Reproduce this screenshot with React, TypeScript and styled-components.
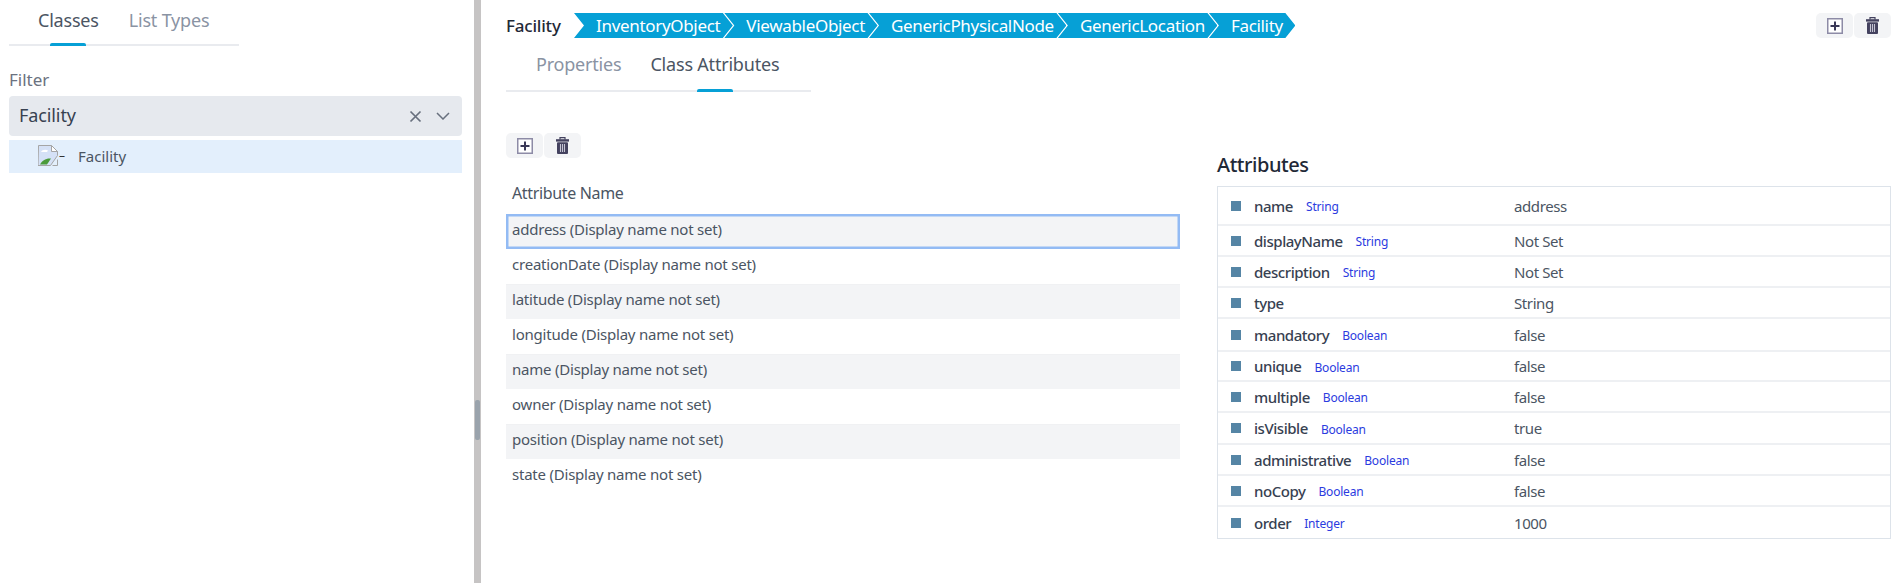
import React from "react";
import styled, { createGlobalStyle } from "styled-components";

const GlobalStyle = createGlobalStyle`
  html, body { margin: 0; padding: 0; background: #fff; }
  body { font-family: "Noto Sans", "Open Sans", sans-serif; color: #374151; }
`;

const attributeNames = ["address", "creationDate", "latitude", "longitude", "name", "owner", "position", "state"];
const crumbs = ["InventoryObject", "ViewableObject", "GenericPhysicalNode", "GenericLocation", "Facility"];
const details = [
  { name: "name", type: "String", value: "address", h: 39 },
  { name: "displayName", type: "String", value: "Not Set", h: 31 },
  { name: "description", type: "String", value: "Not Set", h: 31 },
  { name: "type", type: "", value: "String", h: 31 },
  { name: "mandatory", type: "Boolean", value: "false", h: 33 },
  { name: "unique", type: "Boolean", value: "false", h: 30 },
  { name: "multiple", type: "Boolean", value: "false", h: 31 },
  { name: "isVisible", type: "Boolean", value: "true", h: 32 },
  { name: "administrative", type: "Boolean", value: "false", h: 31 },
  { name: "noCopy", type: "Boolean", value: "false", h: 31 },
  { name: "order", type: "Integer", value: "1000", h: 31 },
];

const AddIcon = () => (
  <svg width="16" height="16" viewBox="0 0 16 16">
    <rect x="0.75" y="0.75" width="14.5" height="14.5" fill="#fff" stroke="#8d8ba6" strokeWidth="1.5" />
    <path d="M8 3.500v9M3.500 8h9" stroke="#3a3857" strokeWidth="2" fill="none" />
  </svg>
);

const TrashIcon = () => (
  <svg width="13" height="17" viewBox="0 0 13 17">
    <path d="M4 2.500V0.700h5V2.500" stroke="#44425f" strokeWidth="1.200" fill="none" />
    <rect x="0" y="2.200" width="13" height="2.400" fill="#44425f" />
    <rect x="1" y="5.200" width="11" height="11.800" rx="1" fill="#44425f" />
    <path d="M4.500 7v8M6.500 7v8M8.500 7v8" stroke="#c4c3d2" strokeWidth="1.100" />
  </svg>
);

const BrokenImage = () => (
  <svg width="20" height="21" viewBox="0 0 20 21">
    <path d="M0.500 0.500h13l6 6v4l-7 10h-12.500z" fill="#d5e1f6" stroke="#a5a5a5" />
    <path d="M3 7c1-2.500 5-3 7-1.500l-1 1.500z" fill="#fff" />
    <path d="M2 19.500c2-4 6-6.500 11-6l-4 6z" fill="#4b9b3a" />
    <path d="M13.500 0.500v6h6z" fill="#fff" stroke="#a5a5a5" />
    <path d="M19.500 14.500v6h-5" fill="none" stroke="#a5a5a5" />
  </svg>
);

const Page = styled.div`
  display: flex;
  width: 1896px;
  height: 583px;
  overflow: hidden;
  background: #fff;
`;

const LeftPane = styled.aside`
  width: 474px;
  flex: none;
  padding: 0 12px 0 9px;
  box-sizing: border-box;
`;

const Splitter = styled.div`
  width: 7px;
  flex: none;
  background: #c6c4c4;
  position: relative;
`;

const Handle = styled.div`
  position: absolute;
  left: 1px;
  top: 400px;
  width: 5px;
  height: 40px;
  border-radius: 2px;
  background: #9aa3ac;
`;

const RightPane = styled.main`
  flex: 1;
  min-width: 0;
  padding: 13px 5px 0 25px;
  box-sizing: border-box;
`;

const TabBar = styled.div<{ $width: number; $height: number; $pad: number; $gap: number; $lineHeight: number }>`
  display: flex;
  width: ${(p) => p.$width}px;
  height: ${(p) => p.$height}px;
  padding-left: ${(p) => p.$pad}px;
  gap: ${(p) => p.$gap}px;
  box-sizing: border-box;
  border-bottom: 2px solid #e9ebef;
  line-height: ${(p) => p.$lineHeight}px;
`;

const Tab = styled.div<{ $active?: boolean }>`
  position: relative;
  height: 100%;
  font-size: 18px;
  letter-spacing: -0.2px;
  color: ${(p) => (p.$active ? "#4b5563" : "#8a93a3")};
  &::after {
    content: "";
    display: ${(p) => (p.$active ? "block" : "none")};
    position: absolute;
    left: 50%;
    bottom: -2px;
    width: 36px;
    height: 3px;
    margin-left: -18px;
    border-radius: 2px 2px 0 0;
    background: #06a0d6;
  }
`;

const FilterLabel = styled.div`
  margin-top: 23px;
  font-size: 17px;
  line-height: 22px;
  color: #6b7280;
`;

const FilterSelect = styled.div`
  display: flex;
  align-items: center;
  height: 40px;
  margin-top: 5px;
  padding: 0 12px 0 10px;
  box-sizing: border-box;
  border-radius: 4px;
  background: #e6e9ee;
  font-size: 18px;
  color: #374151;
`;

const SelectText = styled.span`
  flex: 1;
  padding-bottom: 2px;
  letter-spacing: -0.1px;
`;

const SelectIcons = styled.div`
  display: flex;
  align-items: center;
  gap: 14px;
`;

const TreeRow = styled.div`
  display: flex;
  align-items: center;
  height: 33px;
  margin-top: 4px;
  padding: 0 0 2px 29px;
  box-sizing: border-box;
  background: #e3effc;
  font-size: 15px;
  color: #4b5563;
`;

const TreeDash = styled.span`
  width: 20px;
  padding-left: 1px;
  box-sizing: border-box;
  color: #333;
  font-size: 12px;
`;

const HeaderRow = styled.div`
  display: flex;
  align-items: center;
  height: 25px;
`;

const TitleText = styled.div`
  width: 68px;
  font-size: 17px;
  font-weight: 500;
  letter-spacing: -0.2px;
  color: #1f2937;
`;

const Crumbs = styled.div`
  display: flex;
  flex: 1;
`;

const Crumb = styled.div`
  height: 25px;
  line-height: 25px;
  padding: 0 12.5px 0 22px;
  margin-right: -8.5px;
  background: #06a0d6;
  color: #fff;
  font-size: 17px;
  letter-spacing: -0.32px;
  clip-path: polygon(0 0, calc(100% - 10px) 0, 100% 50%, calc(100% - 10px) 100%, 0 100%, 10px 50%);
`;

const ButtonGroup = styled.div`
  display: flex;
  gap: 1px;
`;

const IconButton = styled.div`
  display: flex;
  align-items: center;
  justify-content: center;
  width: 37px;
  height: 25px;
  border-radius: 5px;
  background: #f3f4f6;
`;

const Columns = styled.div`
  display: flex;
  margin-top: 41px;
`;

const LeftColumn = styled.section`
  width: 674px;
  flex: none;
`;

const RightColumn = styled.section`
  flex: 1;
  margin-left: 37px;
  padding-top: 18px;
`;

const ColumnHead = styled.div`
  height: 56px;
  padding: 0 0 0 6px;
  line-height: 71px;
  font-size: 16px;
  letter-spacing: -0.35px;
  color: #4b5563;
`;

const NameRow = styled.div<{ $selected?: boolean; $odd?: boolean }>`
  height: 35px;
  line-height: 29px;
  padding-left: 6px;
  box-sizing: border-box;
  font-size: 15px;
  letter-spacing: -0.22px;
  color: #4b5563;
  border-top: 1px solid ${(p) => (p.$odd ? "#f0f1f3" : "transparent")};
  background: ${(p) => (p.$odd ? "#f3f4f6" : "#fff")};
  ${(p) => p.$selected && "box-shadow: inset 0 0 0 2.5px #93bbf4; line-height: 31px; border-top: 0;"}
`;

const DetailsTitle = styled.h2`
  margin: 0 0 7px;
  font-size: 20px;
  line-height: 28px;
  font-weight: 500;
  letter-spacing: -0.45px;
  color: #1f2937;
`;

const DetailsTable = styled.div`
  border: 1px solid #dde3ea;
`;

const DetailRow = styled.div`
  display: flex;
  align-items: center;
  padding-left: 13px;
  box-sizing: border-box;
  border-bottom: 2px solid #eef0f3;
  &:last-child { border-bottom: 0; }
`;

const Bullet = styled.span`
  width: 10px;
  height: 10px;
  flex: none;
  margin-right: 13px;
  background: #5585a5;
`;

const DetailLabel = styled.div`
  width: 260px;
  flex: none;
  display: flex;
  align-items: center;
  gap: 13px;
`;

const DetailName = styled.span`
  font-size: 15px;
  font-weight: 500;
  letter-spacing: -0.45px;
  color: #374151;
`;

const DetailType = styled.span`
  padding-top: 2px;
  font-size: 12px;
  letter-spacing: -0.2px;
  color: #2b3be0;
`;

const DetailValue = styled.span`
  font-size: 15px;
  letter-spacing: -0.4px;
  color: #4b5563;
`;

export default function App() {
  return (
    <Page>
      <GlobalStyle />
      <LeftPane>
        <TabBar $width={230} $height={46} $pad={29} $gap={30} $lineHeight={41}>
          <Tab $active>Classes</Tab>
          <Tab>List Types</Tab>
        </TabBar>
        <FilterLabel>Filter</FilterLabel>
        <FilterSelect>
          <SelectText>Facility</SelectText>
          <SelectIcons>
            <svg width="13" height="13" viewBox="0 0 13 13">
              <path d="M1.500 1.500l10 10M11.500 1.500l-10 10" stroke="#68707e" strokeWidth="1.700" fill="none" />
            </svg>
            <svg width="14" height="8" viewBox="0 0 14 8">
              <path d="M1 1l6 6 6-6" stroke="#68707e" strokeWidth="1.500" fill="none" />
            </svg>
          </SelectIcons>
        </FilterSelect>
        <TreeRow>
          <BrokenImage />
          <TreeDash>–</TreeDash>
          Facility
        </TreeRow>
      </LeftPane>
      <Splitter>
        <Handle />
      </Splitter>
      <RightPane>
        <HeaderRow>
          <TitleText>Facility</TitleText>
          <Crumbs>
            {crumbs.map((c) => (
              <Crumb key={c}>{c}</Crumb>
            ))}
          </Crumbs>
          <ButtonGroup>
            <IconButton><AddIcon /></IconButton>
            <IconButton><TrashIcon /></IconButton>
          </ButtonGroup>
        </HeaderRow>
        <TabBar $width={305} $height={54} $pad={30} $gap={29} $lineHeight={53}>
          <Tab>Properties</Tab>
          <Tab $active>Class Attributes</Tab>
        </TabBar>
        <Columns>
          <LeftColumn>
            <ButtonGroup>
              <IconButton><AddIcon /></IconButton>
              <IconButton><TrashIcon /></IconButton>
            </ButtonGroup>
            <ColumnHead>Attribute Name</ColumnHead>
            {attributeNames.map((n, i) => (
              <NameRow key={n} $selected={i === 0} $odd={i % 2 === 0}>
                {n} (Display name not set)
              </NameRow>
            ))}
          </LeftColumn>
          <RightColumn>
            <DetailsTitle>Attributes</DetailsTitle>
            <DetailsTable>
              {details.map((d) => (
                <DetailRow key={d.name} style={{ height: d.h }}>
                  <Bullet />
                  <DetailLabel>
                    <DetailName>{d.name}</DetailName>
                    {d.type && <DetailType>{d.type}</DetailType>}
                  </DetailLabel>
                  <DetailValue>{d.value}</DetailValue>
                </DetailRow>
              ))}
            </DetailsTable>
          </RightColumn>
        </Columns>
      </RightPane>
    </Page>
  );
}
